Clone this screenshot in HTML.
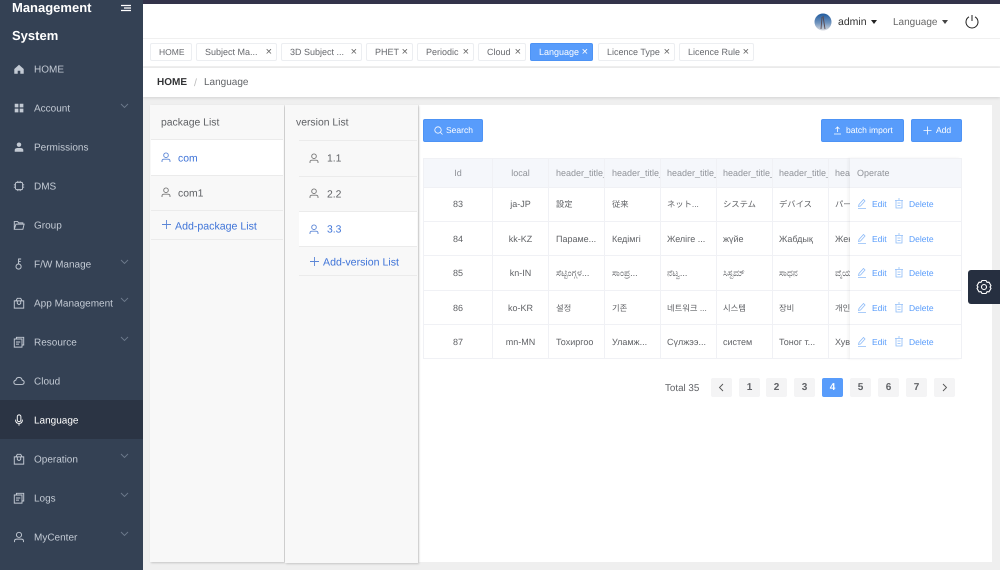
<!DOCTYPE html>
<html><head><meta charset="utf-8"><style>
*{box-sizing:border-box}
html,body{margin:0;padding:0;width:1000px;height:570px;overflow:hidden;background:#efefef}
body{font-family:"Liberation Sans","Noto Sans CJK JP","Noto Sans CJK KR",sans-serif;font-size:10px;color:#606266;position:relative;text-rendering:geometricPrecision}
.a{position:absolute;white-space:nowrap}
.side{left:0;top:0;width:143px;height:570px;background:#344154}
.mi{position:absolute;left:34px;font-size:10px;color:#c3cad4;line-height:14px;transform:translateY(-5.500px);white-space:nowrap}
.ic{position:absolute;left:13px;width:12px;height:12px;transform:translateY(-6px);fill:none;stroke:#c3cad4;stroke-width:1.100}
.ch{position:absolute;left:120px;width:9px;height:6px;fill:none;stroke:#6d7a8c;stroke-width:.9;transform:translateY(-5px)}
.tag{position:absolute;top:43px;height:18px;background:#fff;border:1px solid #eceef1;border-radius:2px;font-size:9px;line-height:17px;color:#67696e;padding-left:8px;white-space:nowrap}
.tag i{position:absolute;right:4px;top:0;font-style:normal;font-size:11px;line-height:16px;color:#666}
.lt{position:absolute;font-size:10.4px;line-height:14px;transform:translateY(-5.500px);white-space:nowrap}
.ln{position:absolute;height:1px;background:#ebebeb}
.blue{color:#3f74d8}
.btn{position:absolute;top:119px;height:23px;background:#589cfb;border:1px solid #4d93f5;border-radius:2px;color:#fff;font-size:8.5px;line-height:21px;white-space:nowrap}
.td{position:absolute;font-size:9px;line-height:12px;color:#606266;transform:translateY(-5px);white-space:nowrap}
.j{font-size:8.3px}
.th{color:#909399}
.v,.h{position:absolute;background:#f0f1f5}
.h{left:423px;width:539px;height:1px}
.v{top:158px;height:201px;width:1px}
.e{position:absolute;font-size:8.5px;line-height:12px;color:#589cfb;transform:translateY(-5px);white-space:nowrap}
.pg{position:absolute;top:378px;width:21px;height:19px;background:#f4f4f5;border-radius:2px;font-size:10px;font-weight:bold;line-height:19px;text-align:center;color:#606266}
.oi{position:absolute;width:10px;height:11px;fill:none;stroke:#8fbcf8;stroke-width:.8;transform:translateY(-6px)}
</style></head><body>
<div class="a" style="left:0;top:0;width:1000px;height:4px;background:#33334a"></div>

<div class="a" style="left:143px;top:4px;width:857px;height:35px;background:#fff;border-bottom:1px solid #f0f0f0"></div>
<div class="a" style="left:143px;top:39px;width:857px;height:28px;background:#fff;border-bottom:1px solid #f0f0f0"></div>
<div class="a" style="left:143px;top:68px;width:857px;height:29px;background:#fff;box-shadow:0 1px 3px rgba(0,0,0,.12)"></div>

<div class="a side">
<div style="position:absolute;left:12px;top:1px;font-size:13px;font-weight:bold;color:#fff;line-height:14px">Management</div>
<div style="position:absolute;left:12px;top:29px;font-size:13px;font-weight:bold;color:#fff;line-height:14px">System</div>
<svg style="position:absolute;left:121px;top:4px" width="10" height="8"><path d="M0 1.500h10M3 4h7M0 6.500h10" stroke="#fff" stroke-width="1.300"/></svg>
<div style="position:absolute;left:0;top:400px;width:143px;height:39px;background:#2b3444"></div>

<svg class="ic" style="top:69px" viewBox="0 0 14 14"><path d="M7 2L1.500 7v5.500h4V9h3v3.500h4V7z" fill="#c3cad4" stroke="none"/></svg><div class="mi" style="top:69px">HOME</div>
<svg class="ic" style="top:108px" viewBox="0 0 14 14"><path d="M2 2h4.300v4.300H2zM7.800 2h4.300v4.300H7.800zM2 7.800h4.300v4.300H2zM7.800 7.800h4.300v4.300H7.800z" fill="#c3cad4" stroke="none"/></svg><div class="mi" style="top:108px">Account</div>
<svg class="ch" style="top:108px" viewBox="0 0 9 6"><path d="M1 1l3.500 3.500L8 1"/></svg>
<svg class="ic" style="top:147px" viewBox="0 0 14 14"><circle cx="7" cy="4.300" r="2.600" fill="#c3cad4" stroke="none"/><path d="M2 12.500V10.500Q2 8.500 5 8.200h4Q12 8.500 12 10.500v2z" fill="#c3cad4" stroke="none"/></svg><div class="mi" style="top:147px">Permissions</div>
<svg class="ic" style="top:186px" viewBox="0 0 14 14"><rect x="2.800" y="2.800" width="8.400" height="8.400" rx="1.500"/><path d="M5 1v1.500M7 1v1.500M9 1v1.500M5 11.500V13M7 11.500V13M9 11.500V13M1 5h1.500M1 7h1.500M1 9h1.500M11.500 5H13M11.500 7H13M11.500 9H13" stroke-width=".8"/></svg><div class="mi" style="top:186px">DMS</div>
<svg class="ic" style="top:225px" viewBox="0 0 14 14"><path d="M1.500 12V3h4l1 1.500h5V6M1.500 12h10l1.500-6H3.500L1.500 12z"/></svg><div class="mi" style="top:225px">Group</div>
<svg class="ic" style="top:264px" viewBox="0 0 14 14"><circle cx="6.500" cy="10" r="3"/><path d="M6.500 7V1.200h3M6.500 4h2.500"/></svg><div class="mi" style="top:264px">F/W Manage</div>
<svg class="ch" style="top:264px" viewBox="0 0 9 6"><path d="M1 1l3.500 3.500L8 1"/></svg>
<svg class="ic" style="top:303px" viewBox="0 0 14 14"><path d="M1.500 4.500h11v8.500h-11zM3.500 4.500L5 1.500h4l1.500 3M5 4.500v3Q7 10 9 7.500v-3"/></svg><div class="mi" style="top:303px">App Management</div>
<svg class="ch" style="top:302px" viewBox="0 0 9 6"><path d="M1 1l3.500 3.500L8 1"/></svg>
<svg class="ic" style="top:342px" viewBox="0 0 14 14"><path d="M4 3.500V1.500h8.500v9H10.500M1.500 3.500h9V13h-9zM3.500 7h5M3.500 9.500h3.500"/></svg><div class="mi" style="top:342px">Resource</div>
<svg class="ch" style="top:341px" viewBox="0 0 9 6"><path d="M1 1l3.500 3.500L8 1"/></svg>
<svg class="ic" style="top:381px" viewBox="0 0 14 14"><path d="M3.800 11Q1 11 1 8.500 1 6.500 3.300 6 4 2.800 7 2.800 10 2.800 10.700 6 13 6.500 13 8.500 13 11 10.200 11z"/></svg><div class="mi" style="top:381px">Cloud</div>
<svg class="ic" style="top:420px;stroke:#fff" viewBox="0 0 14 14"><rect x="5" y="1" width="4.200" height="8" rx="2.100"/><path d="M3 6.500Q3 11 7 11t4-4.500M7 11v2.500"/></svg><div class="mi" style="top:420px;color:#fff">Language</div>
<svg class="ic" style="top:459px" viewBox="0 0 14 14"><path d="M1.500 4.500h11v8.500h-11zM3.500 4.500L5 1.500h4l1.500 3M5 4.500v3Q7 10 9 7.500v-3"/></svg><div class="mi" style="top:459px">Operation</div>
<svg class="ch" style="top:458px" viewBox="0 0 9 6"><path d="M1 1l3.500 3.500L8 1"/></svg>
<svg class="ic" style="top:498px" viewBox="0 0 14 14"><path d="M4 3.500V1.500h8.500v9H10.500M1.500 3.500h9V13h-9zM3.500 7h5M3.500 9.500h3.500"/></svg><div class="mi" style="top:498px">Logs</div>
<svg class="ch" style="top:497px" viewBox="0 0 9 6"><path d="M1 1l3.500 3.500L8 1"/></svg>
<svg class="ic" style="top:537px" viewBox="0 0 14 14"><circle cx="7" cy="4.500" r="3"/><path d="M1.800 13V11.500Q1.800 9.500 4.500 9.500h5q2.700 0 2.700 2V13"/></svg><div class="mi" style="top:537px">MyCenter</div>
<svg class="ch" style="top:536px" viewBox="0 0 9 6"><path d="M1 1l3.500 3.500L8 1"/></svg>
</div>

<!-- header right -->
<svg class="a" style="left:814px;top:13px" width="18" height="18" viewBox="0 0 18 18"><defs><linearGradient id="g" x1="0" y1="0" x2="0" y2="1"><stop offset="0" stop-color="#1f5a9e"/><stop offset=".55" stop-color="#6f93bd"/><stop offset="1" stop-color="#d9dbe0"/></linearGradient></defs><circle cx="9" cy="9" r="8.500" fill="url(#g)"/><path d="M8 4L7 16M9 3l2 13" stroke="#5a4a50" stroke-width=".9"/></svg>
<div class="a" style="left:838px;top:15px;font-size:10.5px;line-height:14px;color:#333">admin</div>
<div class="a" style="left:871px;top:20px;width:0;height:0;border-left:3.500px solid transparent;border-right:3.500px solid transparent;border-top:4px solid #222"></div>
<div class="a" style="left:893px;top:15.500px;font-size:10px;line-height:14px;color:#666">Language</div>
<div class="a" style="left:942px;top:20px;width:0;height:0;border-left:3.500px solid transparent;border-right:3.500px solid transparent;border-top:4px solid #444"></div>
<svg class="a" style="left:964px;top:13px" width="16" height="17" viewBox="0 0 16 17"><path d="M5 3.800A6 6 0 1 0 11 3.800M8 2v6" fill="none" stroke="#222" stroke-width="1"/></svg>

<!-- tags -->
<div class="tag" style="left:150px;width:42px;font-size:8.5px">HOME</div>
<div class="tag" style="left:196px;width:81px">Subject Ma...<i>×</i></div>
<div class="tag" style="left:281px;width:81px">3D Subject ...<i>×</i></div>
<div class="tag" style="left:366px;width:47px">PHET<i>×</i></div>
<div class="tag" style="left:417px;width:57px">Periodic<i>×</i></div>
<div class="tag" style="left:478px;width:48px">Cloud<i>×</i></div>
<div class="tag" style="left:530px;width:63px;background:#589cfb;border-color:#4d93f5;color:#fff">Language<i style="color:#fff">×</i></div>
<div class="tag" style="left:598px;width:77px">Licence Type<i>×</i></div>
<div class="tag" style="left:679px;width:75px">Licence Rule<i>×</i></div>

<!-- breadcrumb -->
<div class="a" style="left:157px;top:76px;font-size:10px;line-height:14px;font-weight:bold;color:#303133">HOME</div>
<div class="a" style="left:194px;top:76px;font-size:10.500px;line-height:14px;color:#bbb">/</div>
<div class="a" style="left:204px;top:76px;font-size:10px;line-height:14px;color:#606266">Language</div>

<!-- panels -->
<div class="a" style="left:419px;top:105px;width:573px;height:457px;background:#fff"></div>
<div class="a" style="left:150px;top:105px;width:134px;height:457px;background:#f8f8f8;box-shadow:1px 1px 2px rgba(0,0,0,.18)"></div>
<div class="a" style="left:285px;top:105px;width:133px;height:458px;background:#f8f8f8;box-shadow:1px 1px 2px rgba(0,0,0,.18)"></div>

<div class="lt" style="left:161px;top:122px;color:#606266">package List</div>
<div class="ln" style="left:151px;top:139px;width:132px"></div>
<div class="a" style="left:151px;top:140px;width:132px;height:35px;background:#fff"></div>
<svg class="a" style="left:161px;top:152px" width="10" height="11" viewBox="0 0 10 11"><circle cx="5" cy="3.200" r="2.300" fill="none" stroke="#5b86d6" stroke-width=".9"/><path d="M1 10V9q0-1.800 2-1.800h4q2 0 2 1.800v1" fill="none" stroke="#5b86d6" stroke-width=".9"/></svg>
<div class="lt blue" style="left:178px;top:158px">com</div>
<div class="ln" style="left:151px;top:175px;width:132px"></div>
<svg class="a" style="left:161px;top:187px" width="10" height="11" viewBox="0 0 10 11"><circle cx="5" cy="3.200" r="2.300" fill="none" stroke="#777" stroke-width=".9"/><path d="M1 10V9q0-1.800 2-1.800h4q2 0 2 1.800v1" fill="none" stroke="#777" stroke-width=".9"/></svg>
<div class="lt" style="left:178px;top:193px">com1</div>
<div class="ln" style="left:151px;top:210px;width:132px"></div>
<svg class="a" style="left:162px;top:220px" width="9" height="9"><path d="M4.500 0v9M0 4.500h9" stroke="#5b86d6" stroke-width=".9"/></svg>
<div class="lt blue" style="left:175px;top:225px;font-size:10.6px">Add-package List</div>
<div class="ln" style="left:151px;top:239px;width:132px"></div>

<div class="lt" style="left:296px;top:122px;color:#606266">version List</div>
<div class="ln" style="left:299px;top:140px;width:118px"></div>
<svg class="a" style="left:309px;top:153px" width="10" height="11" viewBox="0 0 10 11"><circle cx="5" cy="3.200" r="2.300" fill="none" stroke="#777" stroke-width=".9"/><path d="M1 10V9q0-1.800 2-1.800h4q2 0 2 1.800v1" fill="none" stroke="#777" stroke-width=".9"/></svg>
<div class="lt" style="left:327px;top:158px">1.1</div>
<div class="ln" style="left:299px;top:176px;width:118px"></div>
<svg class="a" style="left:309px;top:188px" width="10" height="11" viewBox="0 0 10 11"><circle cx="5" cy="3.200" r="2.300" fill="none" stroke="#777" stroke-width=".9"/><path d="M1 10V9q0-1.800 2-1.800h4q2 0 2 1.800v1" fill="none" stroke="#777" stroke-width=".9"/></svg>
<div class="lt" style="left:327px;top:194px">2.2</div>
<div class="ln" style="left:299px;top:211px;width:118px"></div>
<div class="a" style="left:299px;top:212px;width:118px;height:34px;background:#fff"></div>
<svg class="a" style="left:309px;top:224px" width="10" height="11" viewBox="0 0 10 11"><circle cx="5" cy="3.200" r="2.300" fill="none" stroke="#5b86d6" stroke-width=".9"/><path d="M1 10V9q0-1.800 2-1.800h4q2 0 2 1.800v1" fill="none" stroke="#5b86d6" stroke-width=".9"/></svg>
<div class="lt blue" style="left:327px;top:229px">3.3</div>
<div class="ln" style="left:299px;top:246px;width:118px"></div>
<svg class="a" style="left:310px;top:257px" width="9" height="9"><path d="M4.500 0v9M0 4.500h9" stroke="#5b86d6" stroke-width=".9"/></svg>
<div class="lt blue" style="left:323px;top:261px;font-size:10.6px">Add-version List</div>
<div class="ln" style="left:299px;top:275px;width:118px"></div>

<!-- buttons -->
<div class="btn" style="left:423px;width:60px;padding-left:22px"><svg style="position:absolute;left:10px;top:6px" width="9" height="9" viewBox="0 0 9 9"><circle cx="4" cy="4" r="3.200" fill="none" stroke="#fff" stroke-width=".8"/><path d="M6.500 6.500L8.500 8.500" stroke="#fff" stroke-width=".8"/></svg>Search</div>
<div class="btn" style="left:821px;width:83px;padding-left:24px"><svg style="position:absolute;left:11px;top:6px" width="9" height="9" viewBox="0 0 9 9"><path d="M4.500 6V1M2.500 3L4.500 1l2 2M1 8h7" fill="none" stroke="#fff" stroke-width=".8"/></svg>batch import</div>
<div class="btn" style="left:911px;width:51px;padding-left:24px"><svg style="position:absolute;left:11px;top:6px" width="9" height="9"><path d="M4.500 .5v8M.5 4.500h8" stroke="#fff" stroke-width=".8"/></svg>Add</div>

<!-- table -->
<div class="a" style="left:423px;top:158px;width:539px;height:29px;background:#f5f7fb"></div>
<div class="h" style="top:158px"></div><div class="h" style="top:187px"></div><div class="h" style="top:221px"></div><div class="h" style="top:255px"></div><div class="h" style="top:290px"></div><div class="h" style="top:324px"></div><div class="h" style="top:358px"></div>
<div class="v" style="left:423px"></div><div class="v" style="left:492px"></div><div class="v" style="left:548px"></div><div class="v" style="left:604px"></div><div class="v" style="left:660px"></div><div class="v" style="left:716px"></div><div class="v" style="left:772px"></div><div class="v" style="left:828px"></div><div class="v" style="left:961px"></div>

<div class="td th" style="left:424px;width:68px;text-align:center;top:172px">Id</div>
<div class="td th" style="left:493px;width:55px;text-align:center;top:172px">local</div>
<div class="td th" style="left:556px;width:48px;overflow:hidden;top:172px">header_title_</div>
<div class="td th" style="left:612px;width:48px;overflow:hidden;top:172px">header_title_</div>
<div class="td th" style="left:667px;width:49px;overflow:hidden;top:172px">header_title_</div>
<div class="td th" style="left:723px;width:49px;overflow:hidden;top:172px">header_title_</div>
<div class="td th" style="left:779px;width:49px;overflow:hidden;top:172px">header_title_</div>
<div class="td th" style="left:835px;width:15px;overflow:hidden;top:172px">header</div>

<div class="td" style="left:424px;width:68px;text-align:center;top:203px">83</div><div class="td" style="left:493px;width:55px;text-align:center;top:203px">ja-JP</div><div class="td j" style="left:556px;top:203px">設定</div><div class="td j" style="left:612px;top:203px">従来</div><div class="td j" style="left:667px;top:203px">ネット...</div><div class="td j" style="left:723px;top:203px">システム</div><div class="td j" style="left:779px;top:203px">デバイス</div><div class="td j" style="left:835px;width:15px;overflow:hidden;top:203px">パーソ</div>
<div class="td" style="left:424px;width:68px;text-align:center;top:238px">84</div><div class="td" style="left:493px;width:55px;text-align:center;top:238px">kk-KZ</div><div class="td" style="left:556px;top:238px">Параме...</div><div class="td" style="left:612px;top:238px">Кедімгі</div><div class="td" style="left:667px;top:238px">Желіге ...</div><div class="td" style="left:723px;top:238px">жүйе</div><div class="td" style="left:779px;top:238px">Жабдық</div><div class="td" style="left:835px;width:15px;overflow:hidden;top:238px">Жеке</div>
<div class="td" style="left:424px;width:68px;text-align:center;top:272px">85</div><div class="td" style="left:493px;width:55px;text-align:center;top:272px">kn-IN</div><div class="td" style="left:556px;top:272px">ಸೆಟ್ಟಿಂಗ್ಗಳ...</div><div class="td" style="left:612px;top:272px">ಸಾಂಪ್ರ...</div><div class="td" style="left:667px;top:272px">ನೆಟ್ವ...</div><div class="td" style="left:723px;top:272px">ಸಿಸ್ಟಮ್</div><div class="td" style="left:779px;top:272px">ಸಾಧನ</div><div class="td" style="left:835px;width:15px;overflow:hidden;top:272px">ವೈಯ</div>
<div class="td" style="left:424px;width:68px;text-align:center;top:307px">86</div><div class="td" style="left:493px;width:55px;text-align:center;top:307px">ko-KR</div><div class="td j" style="left:556px;top:307px">설정</div><div class="td j" style="left:612px;top:307px">기존</div><div class="td j" style="left:667px;top:307px">네트워크 ...</div><div class="td j" style="left:723px;top:307px">시스템</div><div class="td j" style="left:779px;top:307px">장비</div><div class="td j" style="left:835px;width:15px;overflow:hidden;top:307px">개인</div>
<div class="td" style="left:424px;width:68px;text-align:center;top:341px">87</div><div class="td" style="left:493px;width:55px;text-align:center;top:341px">mn-MN</div><div class="td" style="left:556px;top:341px">Тохиргоо</div><div class="td" style="left:612px;top:341px">Уламж...</div><div class="td" style="left:667px;top:341px">Сүлжээ...</div><div class="td" style="left:723px;top:341px">систем</div><div class="td" style="left:779px;top:341px">Тоног т...</div><div class="td" style="left:835px;width:15px;overflow:hidden;top:341px">Хувь</div>

<!-- fixed column -->
<div class="a" style="left:850px;top:158px;width:111px;height:201px;box-shadow:-2px 0 3px rgba(0,0,0,.05)"></div>
<div class="td th" style="left:857px;top:172px">Operate</div>

<svg class="oi" style="left:857px;top:204px" viewBox="0 0 10 11"><path d="M1.500 8.500L2 6.500 6.500 1.500 8 3 3.500 8zM1 10.500h8"/></svg><div class="e" style="left:872px;top:203px">Edit</div><svg class="oi" style="left:894px;top:204px" viewBox="0 0 10 11"><path d="M1 2.500h8M2 2.500V10h6V2.500M4 1h2M3.500 5h3M3.500 7.500h3"/></svg><div class="e" style="left:909px;top:203px">Delete</div>
<svg class="oi" style="left:857px;top:239px" viewBox="0 0 10 11"><path d="M1.500 8.500L2 6.500 6.500 1.500 8 3 3.500 8zM1 10.500h8"/></svg><div class="e" style="left:872px;top:238px">Edit</div><svg class="oi" style="left:894px;top:239px" viewBox="0 0 10 11"><path d="M1 2.500h8M2 2.500V10h6V2.500M4 1h2M3.500 5h3M3.500 7.500h3"/></svg><div class="e" style="left:909px;top:238px">Delete</div>
<svg class="oi" style="left:857px;top:273px" viewBox="0 0 10 11"><path d="M1.500 8.500L2 6.500 6.500 1.500 8 3 3.500 8zM1 10.500h8"/></svg><div class="e" style="left:872px;top:272px">Edit</div><svg class="oi" style="left:894px;top:273px" viewBox="0 0 10 11"><path d="M1 2.500h8M2 2.500V10h6V2.500M4 1h2M3.500 5h3M3.500 7.500h3"/></svg><div class="e" style="left:909px;top:272px">Delete</div>
<svg class="oi" style="left:857px;top:308px" viewBox="0 0 10 11"><path d="M1.500 8.500L2 6.500 6.500 1.500 8 3 3.500 8zM1 10.500h8"/></svg><div class="e" style="left:872px;top:307px">Edit</div><svg class="oi" style="left:894px;top:308px" viewBox="0 0 10 11"><path d="M1 2.500h8M2 2.500V10h6V2.500M4 1h2M3.500 5h3M3.500 7.500h3"/></svg><div class="e" style="left:909px;top:307px">Delete</div>
<svg class="oi" style="left:857px;top:342px" viewBox="0 0 10 11"><path d="M1.500 8.500L2 6.500 6.500 1.500 8 3 3.500 8zM1 10.500h8"/></svg><div class="e" style="left:872px;top:341px">Edit</div><svg class="oi" style="left:894px;top:342px" viewBox="0 0 10 11"><path d="M1 2.500h8M2 2.500V10h6V2.500M4 1h2M3.500 5h3M3.500 7.500h3"/></svg><div class="e" style="left:909px;top:341px">Delete</div>

<!-- pagination -->
<div class="a" style="left:665px;top:381.500px;font-size:9.8px;line-height:13px;color:#606266">Total 35</div>
<div class="pg" style="left:711px"><svg width="6" height="9" style="margin-top:5px;display:block;margin-left:7px"><path d="M5 1L1.500 4.500 5 8" fill="none" stroke="#555" stroke-width=".9"/></svg></div>
<div class="pg" style="left:739px">1</div><div class="pg" style="left:766px">2</div><div class="pg" style="left:794px">3</div>
<div class="pg" style="left:822px;background:#589cfb;color:#fff">4</div>
<div class="pg" style="left:850px">5</div><div class="pg" style="left:878px">6</div><div class="pg" style="left:906px">7</div>
<div class="pg" style="left:934px"><svg width="6" height="9" style="margin-top:5px;display:block;margin-left:8px"><path d="M1 1l3.500 3.500L1 8" fill="none" stroke="#555" stroke-width=".9"/></svg></div>

<!-- settings -->
<div class="a" style="left:968px;top:270px;width:32px;height:34px;background:#262f40;border-radius:3px 0 0 3px"></div>
<svg class="a" style="left:976px;top:279px" width="16" height="16" viewBox="0 0 16 16"><path d="M6 1.500h4l1 1.800 2-.1 2 3.400-1 1.400 1 1.400-2 3.400-2-.1-1 1.800H6l-1-1.800-2 .1-2-3.400 1-1.400-1-1.400 2-3.400 2 .1z" fill="none" stroke="#fff" stroke-width="1.100" stroke-linejoin="round"/><circle cx="8" cy="8" r="2.500" fill="none" stroke="#fff" stroke-width="1.100"/></svg>
</body></html>
